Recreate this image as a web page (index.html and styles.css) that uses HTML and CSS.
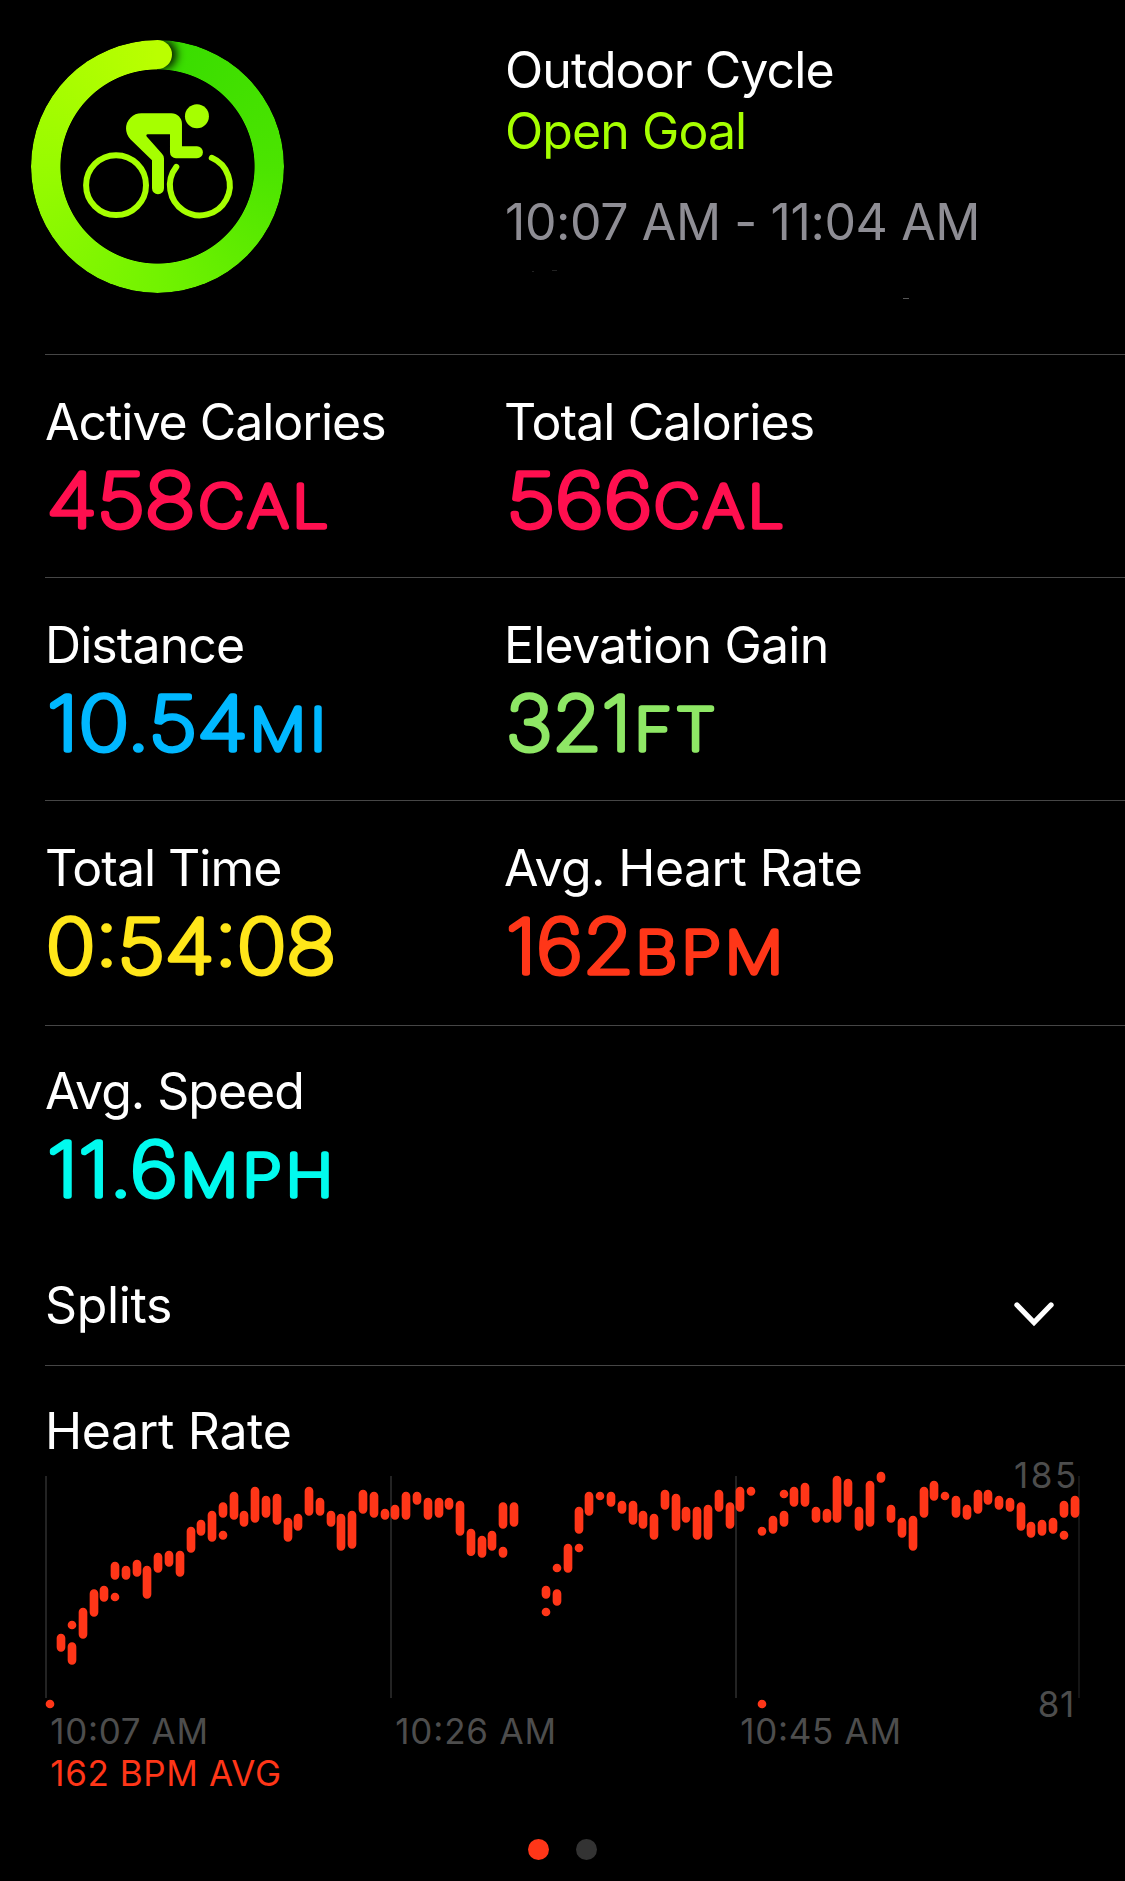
FILE: index.html
```html
<!DOCTYPE html>
<html lang="en">
<head>
<meta charset="utf-8">
<title>Outdoor Cycle</title>
<link rel="stylesheet" href="styles.css">
</head>
<body>
<main class="workout">
  <header class="summary">
    <div class="ring">
      <div class="ring-track"></div>
      <svg class="ring-icon" viewBox="93 59 759 760" aria-hidden="true">
        <circle cx="591" cy="288" r="36"/>
        <path d="M424 279H514A32 32 0 0 1 546 311V378H591A18 18 0 0 1 591 414H528A18 18 0 0 1 510 396V342H443Q437 343 440 349L486 401Q492 407 492 415V504A18 18 0 0 1 456 504V420L391 357Q378 343 378 325A46 46 0 0 1 424 279Z"/>
        <g class="wheel">
          <circle cx="348" cy="495" r="90"/>
          <path d="M635.500 413A90 90 0 1 1 529 440"/>
        </g>
      </svg>
    </div>
    <div class="summary-text">
      <h1 class="label tight">Outdoor Cycle</h1>
      <p class="label tight goal">Open Goal</p>
      <p class="label time">10:07 AM - 11:04 AM</p>
      <svg class="specks" width="420" height="32" aria-hidden="true"><path d="M27 1.500h2M47 .5h5"/><path class="speck-bright" d="M398 28.500h6"/></svg>
    </div>
  </header>

  <section class="metrics">
    <div class="metric-row">
      <div class="metric calories">
        <h2 class="label tighter">Active Calories</h2>
        <svg class="value" viewBox="0 0 400 96"><text x="1.500" y="75" textLength="149" lengthAdjust="spacingAndGlyphs">458</text><text class="unit" x="153.500" y="75" textLength="134" lengthAdjust="spacingAndGlyphs">CAL</text></svg>
      </div>
      <div class="metric calories">
        <h2 class="label tight">Total Calories</h2>
        <svg class="value" viewBox="0 0 400 96"><text x="2.500" y="75" textLength="146" lengthAdjust="spacingAndGlyphs">566</text><text class="unit" x="150" y="75" textLength="134" lengthAdjust="spacingAndGlyphs">CAL</text></svg>
      </div>
    </div>
    <div class="metric-row">
      <div class="metric distance">
        <h2 class="label tight">Distance</h2>
        <svg class="value" viewBox="0 0 400 96"><text x="2" y="75" textLength="201" lengthAdjust="spacingAndGlyphs">10.54</text><text class="unit" x="205" y="75" textLength="80" lengthAdjust="spacingAndGlyphs">MI</text></svg>
      </div>
      <div class="metric elevation">
        <h2 class="label snug">Elevation Gain</h2>
        <svg class="value" viewBox="0 0 400 96"><text x="2" y="75" textLength="125" lengthAdjust="spacingAndGlyphs">321</text><text class="unit" x="130.500" y="75" textLength="85" lengthAdjust="spacingAndGlyphs">FT</text></svg>
      </div>
    </div>
    <div class="metric-row tall">
      <div class="metric duration">
        <h2 class="label tighter">Total Time</h2>
        <svg class="value" viewBox="0 0 400 96"><text x="1" y="75" textLength="290" lengthAdjust="spacingAndGlyphs">0:54:08</text></svg>
      </div>
      <div class="metric heart">
        <h2 class="label">Avg. Heart Rate</h2>
        <svg class="value" viewBox="0 0 400 96"><text x="2" y="75" textLength="128" lengthAdjust="spacingAndGlyphs">162</text><text class="unit" x="131.500" y="75" textLength="152" lengthAdjust="spacingAndGlyphs">BPM</text></svg>
      </div>
    </div>
    <div class="metric-row last">
      <div class="metric speed">
        <h2 class="label tighter">Avg. Speed</h2>
        <svg class="value" viewBox="0 0 400 96"><text x="2" y="75" textLength="131" lengthAdjust="spacingAndGlyphs">11.6</text><text class="unit" x="135.500" y="75" textLength="157" lengthAdjust="spacingAndGlyphs">MPH</text></svg>
      </div>
    </div>
  </section>

  <section class="splits">
    <h2 class="label loose">Splits</h2>
    <svg class="chevron" viewBox="0 0 42 30" aria-hidden="true"><path d="M4 6L21 23.500L38 6"/></svg>
  </section>

  <section class="heart-rate">
    <h2 class="label loose">Heart Rate</h2>
    <svg class="chart" viewBox="0 0 3375 1050">
      <path class="grid" d="M138 78V744M1173 78V744M2208 78V744"/>
      <path class="grid grid-end" d="M3237 78V744"/>
      <path class="bars" id="bars"/>
      <g class="axis">
        <text x="151" y="882" textLength="473">10:07 AM</text>
        <text x="1186" y="882" textLength="482">10:26 AM</text>
        <text x="2221" y="882" textLength="482">10:45 AM</text>
        <text x="3042" y="113" textLength="187">185</text>
        <text x="3113" y="800" textLength="110">81</text>
      </g>
      <text class="average" x="151" y="1008" textLength="692">162 BPM AVG</text>
    </svg>
    <div class="pager"><span class="page current"></span><span class="page"></span></div>
  </section>
</main>
<script src="chart.js"></script>
</body>
</html>
```
FILE: styles.css
```css
* { box-sizing: border-box; margin: 0; padding: 0; }

body {
  background: #000;
  color: #fff;
  font-family: Inter, "Liberation Sans", sans-serif;
}

.workout { width: 1125px; height: 1881px; overflow: hidden; }

.label {
  font-size: 50px;
  font-weight: 400;
  line-height: 60px;
  letter-spacing: -0.6px;
  white-space: nowrap;
}
.snug { letter-spacing: -0.78px; }
.tight { letter-spacing: -0.92px; }
.tighter { letter-spacing: -1.02px; }
.loose { letter-spacing: -0.35px; }

/* header */
.summary { display: grid; grid-template-columns: 474px 1fr; height: 354px; padding: 40px 0 0 31px; }
.ring { display: grid; width: 253px; height: 253px; }
.ring > * { grid-area: 1 / 1; }
.ring-track {
  border-radius: 50%;
  background: conic-gradient(#38dc00, #4be400 25%, #72f300 50%, #98fb00 75%, #baff00);
  mask: radial-gradient(circle, transparent 96.700px, #000 97.500px);
}
.ring-track::after {
  content: "";
  display: block;
  width: 29px;
  height: 29px;
  margin-left: 112px;
  border-radius: 50%;
  background: #baff00;
  box-shadow: 4px 0 8px 1px rgba(0, 0, 0, .85);
  clip-path: inset(-10px -24px -10px 14px);
}
.ring-icon { width: 253px; height: 253px; fill: #a6ff00; }
.wheel { fill: none; stroke: #a6ff00; stroke-width: 18; stroke-linecap: round; }
.goal { margin-top: 1px; color: #a6ff00; }
.time { margin-top: 31px; color: #8e8d94; letter-spacing: -0.4px; }
.specks { display: block; margin-top: 18px; fill: none; stroke: #222; stroke-width: 1; }
.speck-bright { stroke: #555; }

/* metrics */
.metric-row {
  display: grid;
  grid-template-columns: 459px 1fr;
  height: 223px;
  margin-left: 45px;
  padding-top: 37px;
  border-top: 1px solid #464646;
}
.tall { height: 225px; }
.last { height: 221px; padding-top: 35px; }
.value {
  display: block;
  width: 400px;
  height: 96px;
  fill: currentColor;
  stroke: currentColor;
  stroke-width: 5.600;
  stroke-linejoin: round;
  font-size: 74.500px;
  font-weight: 100;
}
.unit { font-size: 58px; letter-spacing: 4px; }
.calories .value { color: #ff0f4f; }
.distance .value { color: #00b8ff; }
.elevation .value { color: #8ee765; }
.duration .value { color: #ffe619; }
.heart .value { color: #ff3618; }
.speed .value { color: #00faee; }

/* splits */
.splits {
  display: flex;
  justify-content: space-between;
  height: 119px;
  margin-left: 45px;
  padding: 29px 70px 0 0;
}
.chevron { width: 42px; height: 30px; margin-top: 24px; fill: none; stroke: #fff; stroke-width: 5.300; stroke-linecap: round; }

/* heart rate */
.heart-rate { border-top: 1px solid #464646; margin-left: 45px; padding-top: 35px; }
.chart { display: block; width: 1125px; height: 350px; margin: -11px 0 0 -45px; font-size: 105px; }
.grid { stroke: #2a2a2a; stroke-width: 5; }
.grid-end { stroke-width: 3; }
.bars { fill: none; stroke: #ff3618; stroke-width: 26; stroke-linecap: round; }
.axis { fill: #4d4d4d; }
.average { fill: #ff3618; }
.pager { display: flex; gap: 27px; margin: 39px 0 0 483px; }
.page { width: 21px; height: 21px; border-radius: 50%; background: #333; }
.current { background: #ff3618; }
```
FILE: chart.js
```javascript
// Each sample is [x, top, bottom] in chart units, x relative to the start of its group.
const groups = [
  { start: 90, samples: [
    [60,749,775],[93,551,605],[126,512,538],[126,577,644],[159,473,566],[192,418,500],[222,407,455],
    [255,335,389],[255,428,454],[288,347,389],[321,329,380],[351,347,446],[384,308,368],[417,302,350],
    [450,302,380],[483,230,308],[513,209,257],[546,182,275],[579,157,203],[579,242,269],[612,125,209],
    [642,182,230],[675,110,218],[708,137,203],[741,131,224],[774,203,275],[804,191,242],[837,110,197]] },
  { start: 870, samples: [
    [90,143,197],[123,182,230],[153,191,302],[186,182,296],[219,119,191],[252,125,203],[285,176,209],
    [315,164,209],[348,125,209],[381,125,164],[414,143,209],[447,143,203],[477,143,179],[510,152,257],
    [543,236,318],[576,257,323],[606,242,302],[639,157,236],[639,290,323],[672,157,230],[768,407,446],
    [768,473,499],[801,341,367],[801,418,467]] },
  { start: 1560, samples: [
    [144,281,368],[177,170,251],[177,281,307],[207,125,197],[240,125,151],[273,125,170],[306,152,191],
    [339,152,224],[369,182,236],[402,191,269],[435,119,179],[468,131,242],[498,170,218],[531,170,269],
    [564,164,269],[597,119,185],[630,157,236],[660,110,185],[693,110,137],[726,230,257],[726,749,775],
    [759,197,251],[792,119,145],[792,182,230],[822,110,170]] },
  { start: 2370, samples: [
    [45,98,170],[78,170,218],[111,176,218],[141,77,218],[174,86,170],[207,170,242],[240,92,230],
    [273,65,98],[303,164,218],[336,203,263],[369,197,302],[402,110,203],[432,92,152],[465,125,151],
    [498,137,203],[531,164,209],[564,119,191],[594,119,164],[627,137,179],[660,143,185],[693,157,242],
    [723,215,263],[756,209,257],[789,203,251],[822,152,203],[822,242,269],[855,137,203]] }
];

const cap = 13;
document.getElementById("bars").setAttribute("d", groups.flatMap(({ start, samples }) =>
  samples.map(([x, top, bottom]) => `M${start + x} ${top + cap}V${Math.max(bottom - cap, top + cap + 0.1)}`)
).join(""));
```
